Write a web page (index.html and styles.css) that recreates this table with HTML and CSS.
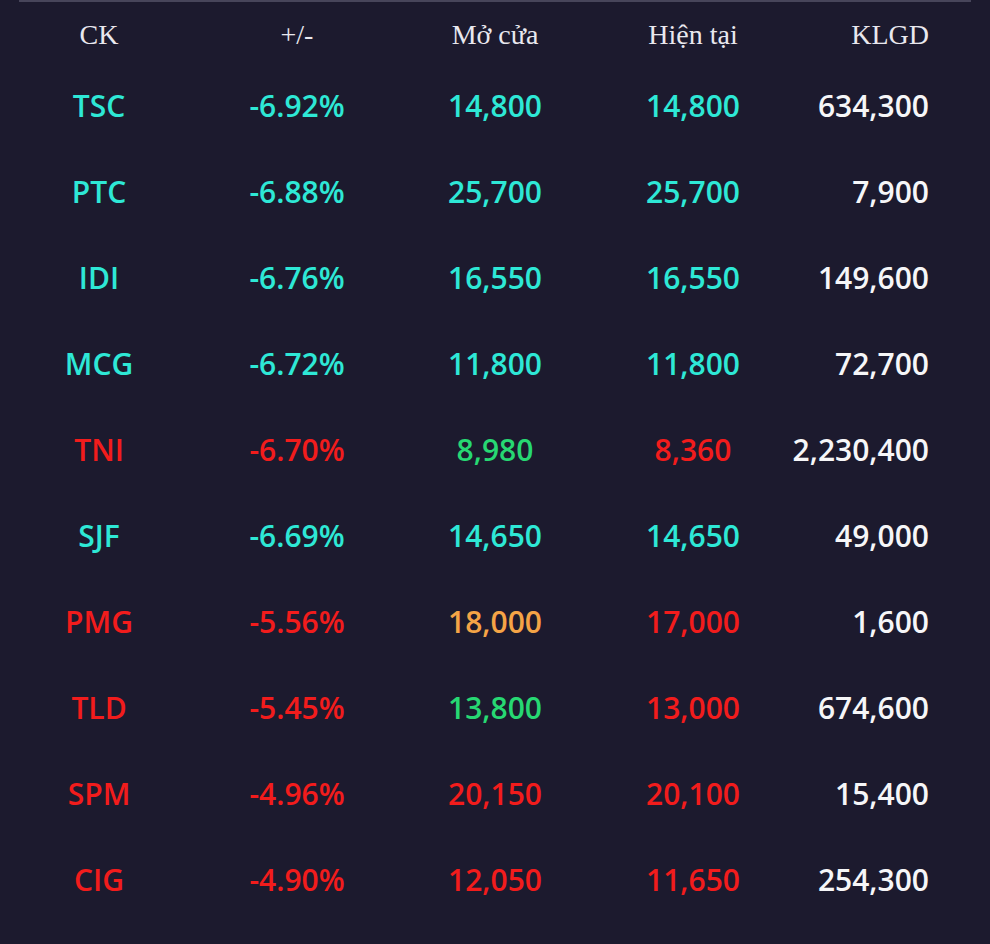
FILE: index.html
```html
<!DOCTYPE html>
<html lang="vi">
<head>
<meta charset="utf-8">
<title>Bảng giá</title>
<link rel="stylesheet" href="styles.css">
</head>
<body>
<div class="topline"></div>
<div class="table">
  <div class="row head">
    <div class="c">CK</div>
    <div class="c">+/-</div>
    <div class="c">Mở cửa</div>
    <div class="c">Hiện tại</div>
    <div class="c r">KLGD</div>
  </div>
  <div class="row">
    <div class="c cy">TSC</div><div class="c cy">-6.92%</div><div class="c cy">14,800</div><div class="c cy">14,800</div><div class="c r wh">634,300</div>
  </div>
  <div class="row">
    <div class="c cy">PTC</div><div class="c cy">-6.88%</div><div class="c cy">25,700</div><div class="c cy">25,700</div><div class="c r wh">7,900</div>
  </div>
  <div class="row">
    <div class="c cy">IDI</div><div class="c cy">-6.76%</div><div class="c cy">16,550</div><div class="c cy">16,550</div><div class="c r wh">149,600</div>
  </div>
  <div class="row">
    <div class="c cy">MCG</div><div class="c cy">-6.72%</div><div class="c cy">11,800</div><div class="c cy">11,800</div><div class="c r wh">72,700</div>
  </div>
  <div class="row">
    <div class="c rd">TNI</div><div class="c rd">-6.70%</div><div class="c gr">8,980</div><div class="c rd">8,360</div><div class="c r wh">2,230,400</div>
  </div>
  <div class="row">
    <div class="c cy">SJF</div><div class="c cy">-6.69%</div><div class="c cy">14,650</div><div class="c cy">14,650</div><div class="c r wh">49,000</div>
  </div>
  <div class="row">
    <div class="c rd">PMG</div><div class="c rd">-5.56%</div><div class="c or">18,000</div><div class="c rd">17,000</div><div class="c r wh">1,600</div>
  </div>
  <div class="row">
    <div class="c rd">TLD</div><div class="c rd">-5.45%</div><div class="c gr">13,800</div><div class="c rd">13,000</div><div class="c r wh">674,600</div>
  </div>
  <div class="row">
    <div class="c rd">SPM</div><div class="c rd">-4.96%</div><div class="c rd">20,150</div><div class="c rd">20,100</div><div class="c r wh">15,400</div>
  </div>
  <div class="row">
    <div class="c rd">CIG</div><div class="c rd">-4.90%</div><div class="c rd">12,050</div><div class="c rd">11,650</div><div class="c r wh">254,300</div>
  </div>
</div>
</body>
</html>
```
FILE: styles.css
```css
html, body {
  margin: 0;
  padding: 0;
  background: #1c1a2e;
}
body {
  width: 990px;
  height: 944px;
  overflow: hidden;
}
.topline {
  height: 2px;
  margin: 0 19px;
  background: #47455a;
}
.table {
  display: flex;
  flex-direction: column;
}
.row {
  display: grid;
  grid-template-columns: repeat(5, 198px);
  height: 86px;
  line-height: 88px;
  font-family: "Open Sans", "Noto Sans", sans-serif;
  font-size: 30px;
  font-weight: 600;
}
.row.head {
  height: 54px;
  line-height: 54px;
  padding-top: 6px;
  font-family: "Liberation Serif", "Times New Roman", serif;
  font-size: 28px;
  font-weight: 400;
  color: #e9e8ee;
}
.c {
  text-align: center;
  white-space: nowrap;
}
.c.r {
  text-align: right;
  padding-right: 61px;
}
.cy { color: #2ee8d6; }
.rd { color: #f21c1c; }
.gr { color: #27d873; }
.or { color: #f5a446; }
.wh { color: #f6f6f8; }
```
